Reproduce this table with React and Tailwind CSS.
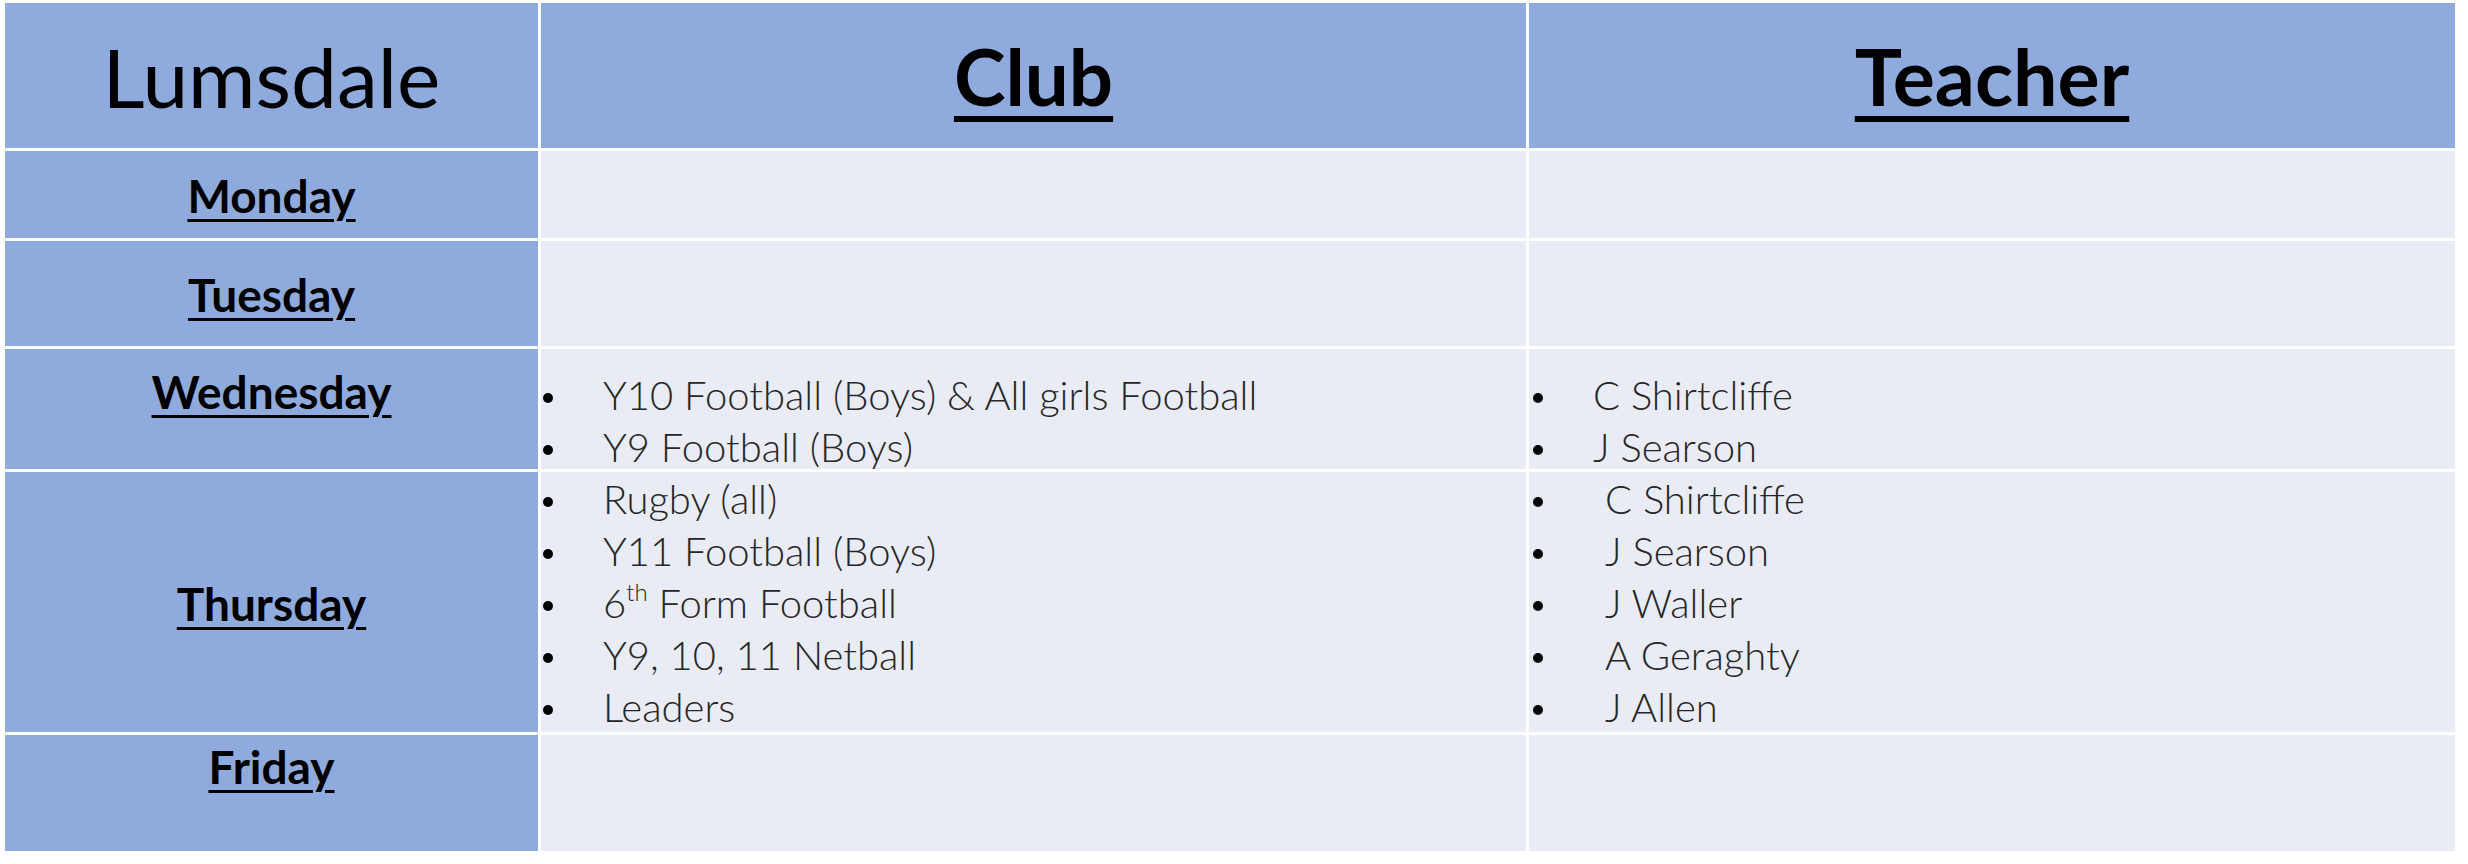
import React from 'react';

const rows = [
  { day: 'Monday', dayPad: 'pt-[22px]', club: null, teacher: null },
  { day: 'Tuesday', dayPad: 'pt-[31px]', club: null, teacher: null },
  {
    day: 'Wednesday',
    dayPad: 'pt-[20px]',
    listPad: 'pt-[20px]',
    club: ['Y10 Football (Boys) & All girls Football', 'Y9 Football (Boys)'],
    teacher: ['C Shirtcliffe', 'J Searson'],
    teacherIndent: 'w-[59px]',
  },
  {
    day: 'Thursday',
    dayPad: 'pt-[109px]',
    listPad: 'pt-[1px]',
    club: [
      'Rugby (all)',
      'Y11 Football (Boys)',
      <>6<sup className="text-[0.6em] -top-[0.7em]">th</sup> Form Football</>,
      'Y9, 10, 11 Netball',
      'Leaders',
    ],
    teacher: ['C Shirtcliffe', 'J Searson', 'J Waller', 'A Geraghty', 'J Allen'],
    teacherIndent: 'w-[71px]',
  },
  { day: 'Friday', dayPad: 'pt-[9px]', club: null, teacher: null },
];

function BulletList({ items, pad, indent }) {
  return (
    <div className={`flex flex-col ${pad}`}>
      {items.map((item, i) => (
        <div key={i} className="flex items-center h-[52px]">
          <div className={`${indent} shrink-0 flex`}>
            <span className="block w-[10px] h-[10px] -ml-[1px] mt-[5px] rounded-full bg-black" />
          </div>
          <span className="whitespace-nowrap leading-[52px]">{item}</span>
        </div>
      ))}
    </div>
  );
}

export default function App() {
  return (
    <div className="w-[2468px] h-[864px] bg-white pt-[3px] pl-[5px] font-['Lato',sans-serif] text-black">
      <div className="grid grid-cols-[533px_985px_926px] grid-rows-[145px_87px_105px_120px_260px_116px] gap-[3px] w-fit">
        {/* header row */}
        <div className="bg-[#8faadc] flex justify-center pt-[32px]">
          <span className="text-[82px] leading-none">Lumsdale</span>
        </div>
        <div className="bg-[#8faadc] flex justify-center pt-[34px]">
          <span className="text-[78px] leading-none font-bold underline decoration-[6px] underline-offset-[10px]">Club</span>
        </div>
        <div className="bg-[#8faadc] flex justify-center pt-[33px]">
          <span className="text-[79px] leading-none font-bold underline decoration-[6px] underline-offset-[10px]">Teacher</span>
        </div>

        {rows.map((r) => (
          <React.Fragment key={r.day}>
            <div className={`bg-[#8faadc] flex justify-center ${r.dayPad}`}>
              <span className="text-[46px] leading-none font-bold underline decoration-[3px] underline-offset-[6px]">{r.day}</span>
            </div>
            <div className="bg-[#e9ebf5] pl-[3px] text-[40px] font-light text-[#262626]">
              {r.club && <BulletList items={r.club} pad={r.listPad} indent="w-[59px]" />}
            </div>
            <div className="bg-[#e9ebf5] pl-[5px] text-[40px] font-light text-[#262626]">
              {r.teacher && <BulletList items={r.teacher} pad={r.listPad} indent={r.teacherIndent} />}
            </div>
          </React.Fragment>
        ))}
      </div>
    </div>
  );
}
